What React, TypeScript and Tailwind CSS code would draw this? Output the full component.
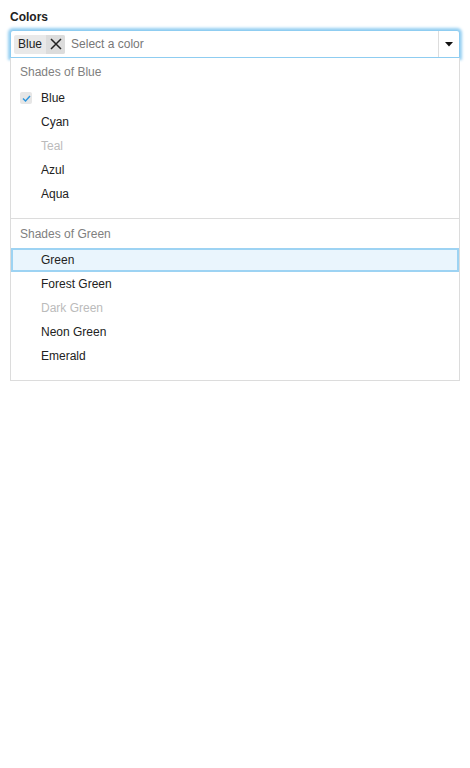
import React from "react";

type Item = { label: string; disabled?: boolean; checked?: boolean; active?: boolean };

const groups: { title: string; items: Item[] }[] = [
  {
    title: "Shades of Blue",
    items: [
      { label: "Blue", checked: true },
      { label: "Cyan" },
      { label: "Teal", disabled: true },
      { label: "Azul" },
      { label: "Aqua" },
    ],
  },
  {
    title: "Shades of Green",
    items: [
      { label: "Green", active: true },
      { label: "Forest Green" },
      { label: "Dark Green", disabled: true },
      { label: "Neon Green" },
      { label: "Emerald" },
    ],
  },
];

export default function App() {
  return (
    <div className="min-h-[768px] bg-white px-[10px] pt-[10px] text-[12px] text-[#222]" style={{ fontFamily: '"Liberation Sans", Arial, sans-serif' }}>
      <div className="mb-[5px] h-[15px] text-[12px] font-bold leading-[15px] text-[#222]">Colors</div>
      <div className="relative">
        <div className="flex h-[28px] items-stretch rounded-t-[3px] border border-[#8fcdf1] bg-white shadow-[0_0_3px_2px_#95cff2]">
          <div className="flex flex-1 items-center pl-[3px]">
            <div className="flex h-[19px] items-stretch rounded-[2px] bg-[#e9e9e9]">
              <span className="flex items-center pl-[4px] pr-[4px] text-[12px] text-[#222]">Blue</span>
              <span className="flex w-[19px] items-center justify-center rounded-r-[2px] bg-[#dcdcdc]">
                <svg width="12" height="12" viewBox="0 0 12 12">
                  <path d="M1 1 L11 11 M11 1 L1 11" stroke="#222" strokeWidth="1.5" fill="none" />
                </svg>
              </span>
            </div>
            <span className="ml-[6px] text-[12px] text-[#777]">Select a color</span>
          </div>
          <div className="flex w-[21px] items-center justify-center border-l border-[#ddd]">
            <svg width="8" height="5" viewBox="0 0 8 5">
              <path d="M0 0 L8 0 L4 4.5 Z" fill="#111" />
            </svg>
          </div>
        </div>
        <div className="relative z-10 border border-t-0 border-[#dcdcdc] bg-white">
          {groups.map((g, gi) => (
            <div key={g.title} className={gi > 0 ? "border-t border-[#dcdcdc] pb-[12px] pt-[1px]" : "pb-[12px]"}>
              <div className="flex h-[28px] items-center pl-[9px] text-[12px] text-[#808080]">{g.title}</div>
              {g.items.map((it) => (
                <div
                  key={it.label}
                  className={
                    it.active
                      ? "flex h-[24px] items-center border-2 border-[#9dd3f3] bg-[#eaf5fd] pl-[28px]"
                      : "flex h-[24px] items-center pl-[30px]"
                  }
                >
                  <span className={it.disabled ? "text-[#bbb]" : "text-[#222]"}>{it.label}</span>
                </div>
              ))}
            </div>
          ))}
          <div className="pointer-events-none absolute left-[9px] top-[34px] flex h-[12px] w-[12px] items-center justify-center rounded-[2px] bg-[#e6e6e6]">
            <svg width="9" height="7" viewBox="0 0 9 7">
              <path d="M1 3.5 L3.5 6 L8 1" stroke="#2a95dd" strokeWidth="1.4" fill="none" />
            </svg>
          </div>
        </div>
      </div>
    </div>
  );
}
